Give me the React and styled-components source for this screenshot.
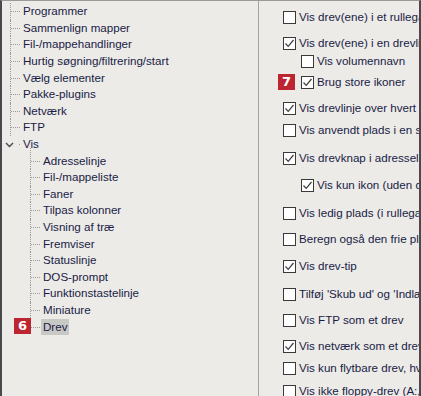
import styled, { createGlobalStyle, css } from 'styled-components';

const GlobalStyle = createGlobalStyle`
  html, body {
    margin: 0;
    padding: 0;
    background: #ecebe8;
  }
  body {
    font-family: 'Liberation Sans', Arial, sans-serif;
    font-size: 11.6px;
    color: #191b45;
  }
`;

const tree = [
  { label: 'Programmer', level: 0 },
  { label: 'Sammenlign mapper', level: 0 },
  { label: 'Fil-/mappehandlinger', level: 0 },
  { label: 'Hurtig søgning/filtrering/start', level: 0 },
  { label: 'Vælg elementer', level: 0 },
  { label: 'Pakke-plugins', level: 0 },
  { label: 'Netværk', level: 0 },
  { label: 'FTP', level: 0 },
  { label: 'Vis', level: 0, expanded: true },
  { label: 'Adresselinje', level: 1, first: true },
  { label: 'Fil-/mappeliste', level: 1 },
  { label: 'Faner', level: 1 },
  { label: 'Tilpas kolonner', level: 1 },
  { label: 'Visning af træ', level: 1 },
  { label: 'Fremviser', level: 1 },
  { label: 'Statuslinje', level: 1 },
  { label: 'DOS-prompt', level: 1 },
  { label: 'Funktionstastelinje', level: 1 },
  { label: 'Miniature', level: 1 },
  { label: 'Drev', level: 1, last: true, selected: true, badge: '6' },
];

// step = distance in px from the previous row's centre
const options = [
  { label: 'Vis drev(ene) i et rullegardin', step: 24 },
  { label: 'Vis drev(ene) i en drevlinje', checked: true, step: 26 },
  { label: 'Vis volumennavn', indent: true, step: 18 },
  { label: 'Brug store ikoner', indent: true, checked: true, step: 21, badge: '7' },
  { label: 'Vis drevlinje over hvert vindue', checked: true, step: 26 },
  { label: 'Vis anvendt plads i en statuslinje', step: 22 },
  { label: 'Vis drevknap i adresselinjen', checked: true, step: 28 },
  { label: 'Vis kun ikon (uden drevbogstav)', indent: true, checked: true, step: 27 },
  { label: 'Vis ledig plads (i rullegardin)', step: 28 },
  { label: 'Beregn også den frie plads', step: 26 },
  { label: 'Vis drev-tip', checked: true, step: 27 },
  { label: "Tilføj 'Skub ud' og 'Indlæs'", step: 28 },
  { label: 'Vis FTP som et drev', step: 26 },
  { label: 'Vis netværk som et drev', checked: true, step: 26 },
  { label: 'Vis kun flytbare drev, hvis', step: 22 },
  { label: 'Vis ikke floppy-drev (A:, B:)', step: 23 },
];

export default function App() {
  return (
    <>
      <GlobalStyle />
      <Frame>
        <TreePane>
          {tree.map(item => (
            <TreeRow
              key={item.label}
              $level={item.level}
              $expanded={item.expanded}
              $first={item.first}
              $last={item.last}
            >
              {item.expanded && (
                <Chevron viewBox="0 0 9 6">
                  <path d="M1 1 L4.5 4.5 L8 1" fill="none" stroke="#4a4a4a" strokeWidth="1.4" />
                </Chevron>
              )}
              {item.badge && <TreeBadge>{item.badge}</TreeBadge>}
              <TreeLabel $selected={item.selected}>{item.label}</TreeLabel>
            </TreeRow>
          ))}
        </TreePane>
        <OptionsPane>
          {options.map(opt => (
            <OptionRow key={opt.label} $indent={opt.indent} $step={opt.step}>
              {opt.badge && <OptionBadge>{opt.badge}</OptionBadge>}
              <Box>
                {opt.checked && (
                  <svg width="11" height="11" viewBox="0 0 11 11">
                    <path d="M1.5 5.5 L4.2 8.3 L9.5 2" fill="none" stroke="#3c3c3c" strokeWidth="1.2" />
                  </svg>
                )}
              </Box>
              <OptionText>{opt.label}</OptionText>
            </OptionRow>
          ))}
        </OptionsPane>
      </Frame>
    </>
  );
}

const Frame = styled.div`
  display: flex;
  width: 421px;
  height: 396px;
  box-sizing: border-box;
  overflow: hidden;
  border-top: 1px solid #9a9a9a;
  border-left: 2px solid #4a4a4e;
  border-right: 2px solid #4a4a4e;
  background: #ecebe8;
`;

const TreePane = styled.div`
  width: 256px;
  flex: none;
  padding-top: 2px;
  display: flex;
  flex-direction: column;
  border-right: 1px solid #a3a3a3;
`;

const TreeRow = styled.div`
  position: relative;
  height: 16.6px;
  display: flex;
  align-items: center;
  padding-left: ${p => p.$level * 20 + 19}px;
  white-space: nowrap;

  &::before {
    content: '';
    position: absolute;
    left: ${p => p.$level * 20 + 8}px;
    top: ${p => (p.$first ? '-4px' : '0')};
    bottom: ${p => (p.$last || p.$expanded ? '50%' : '0')};
    border-left: 1px dotted #9a9a9a;
    ${p => p.$expanded && css`display: none;`}
  }

  &::after {
    content: '';
    position: absolute;
    left: ${p => (p.$expanded ? p.$level * 20 + 17 : p.$level * 20 + 9)}px;
    width: ${p => (p.$expanded ? 1 : 9)}px;
    top: 50%;
    border-top: 1px dotted #9a9a9a;
  }
`;

const Chevron = styled.svg`
  position: absolute;
  left: 3px;
  top: 6px;
  width: 9px;
  height: 6px;
`;

const TreeLabel = styled.span`
  padding: 1px 2px;
  line-height: 14px;
  ${p => p.$selected && css`background: #c8c9c5;`}
`;

const badgeStyle = css`
  position: absolute;
  width: 17px;
  height: 16px;
  background: #bd2630;
  color: #fff;
  font-family: 'DejaVu Sans', sans-serif;
  font-weight: bold;
  font-size: 13px;
  line-height: 16px;
  text-align: center;
`;

const TreeBadge = styled.span`
  ${badgeStyle}
  left: 12px;
  top: 0;
`;

const OptionsPane = styled.div`
  flex: 1;
  min-width: 0;
  display: flex;
  flex-direction: column;
  padding-left: 24px;
`;

const OptionRow = styled.div`
  position: relative;
  height: 16px;
  margin-top: ${p => p.$step - 16}px;
  display: flex;
  align-items: center;
  gap: 3px;
  padding-left: ${p => (p.$indent ? 18 : 0)}px;
  white-space: nowrap;
`;

const OptionBadge = styled.span`
  ${badgeStyle}
  left: -5px;
  top: 0;
`;

const Box = styled.span`
  width: 11px;
  height: 11px;
  flex: none;
  border: 1px solid #3a3a3a;
  background: #fff;
  display: flex;
  align-items: center;
  justify-content: center;
`;

const OptionText = styled.span`
  line-height: 16px;
`;
